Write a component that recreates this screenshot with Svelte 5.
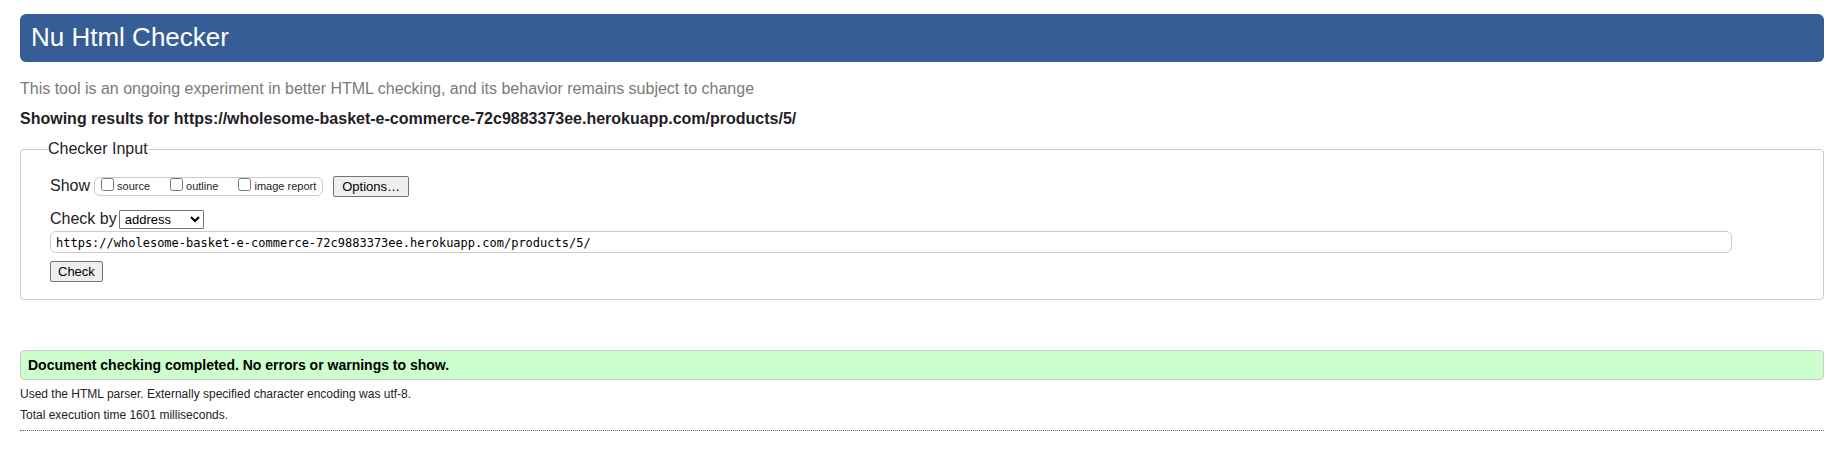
<script>
  let shown = $state({ source: false, outline: false, image: false });
  let method = $state('address');
  let address = $state('https://wholesome-basket-e-commerce-72c9883373ee.herokuapp.com/products/5/');
  const checked = 'https://wholesome-basket-e-commerce-72c9883373ee.herokuapp.com/products/5/';
</script>

<div class="page">
  <header class="banner">
    <h1>Nu Html Checker</h1>
  </header>

  <p class="note">This tool is an ongoing experiment in better HTML checking, and its behavior remains subject to change</p>
  <h2>Showing results for {checked}</h2>

  <form onsubmit={(e) => e.preventDefault()}>
    <fieldset>
      <legend>Checker Input</legend>
      <div class="row show-row">
        <span class="lead">Show</span>
        <div class="checks">
          <label><input type="checkbox" bind:checked={shown.source} />source</label>
          <label><input type="checkbox" bind:checked={shown.outline} />outline</label>
          <label><input type="checkbox" bind:checked={shown.image} />image report</label>
        </div>
        <button type="button">Options…</button>
      </div>
      <div class="row by-row">
        <label class="lead" for="method">Check by</label>
        <select id="method" bind:value={method}>
          <option value="address">address</option>
          <option value="file">file upload</option>
          <option value="text">text input</option>
        </select>
      </div>
      <input class="address" type="text" aria-label="Address" spellcheck="false" bind:value={address} />
      <button class="submit" type="submit">Check</button>
    </fieldset>
  </form>

  <p class="success">Document checking completed. No errors or warnings to show.</p>
  <p class="detail">Used the HTML parser. Externally specified character encoding was utf-8.</p>
  <p class="detail">Total execution time 1601 milliseconds.</p>
  <hr />
</div>

<style>
  :global(body) {
    margin: 0;
    background: #fff;
  }
  .page {
    padding: 14px 9px 14px 20px;
    font-family: Arial, "Liberation Sans", sans-serif;
    font-size: 16px;
    line-height: 20px;
    color: #1f2126;
  }
  .banner {
    padding: 8px 11px 10px;
    border-radius: 6px;
    background: #365d95;
  }
  h1 {
    margin: 0;
    font-size: 26px;
    line-height: 30px;
    font-weight: 400;
    color: #fff;
  }
  h2 {
    margin: 10px 0;
    font-size: 16px;
    font-weight: 700;
  }
  .note {
    margin: 17px 0 0;
    color: #7a7a7a;
  }
  fieldset {
    margin: 0;
    min-width: 0;
    padding: 16px 91px 17px 29px;
    border: 1px solid #ccc;
    border-radius: 4px;
  }
  legend {
    margin-left: -2px;
    padding: 0;
  }
  .row {
    display: flex;
    align-items: center;
  }
  .show-row {
    height: 22px;
    margin-bottom: 12px;
  }
  .by-row {
    height: 20px;
    margin-bottom: 2px;
    gap: 2px;
  }
  .checks {
    display: flex;
    align-items: center;
    box-sizing: border-box;
    height: 19px;
    margin: 0 10px 0 4px;
    padding: 0 6px;
    gap: 20px;
    border: 1px solid #ccc;
    border-radius: 6px;
  }
  .checks label {
    display: flex;
    align-items: center;
    gap: 3px;
    font-size: 11px;
    line-height: 17px;
  }
  .checks input {
    width: 13px;
    height: 13px;
    margin: 0 0 3px;
  }
  button {
    display: block;
    box-sizing: border-box;
    height: 21px;
    padding: 0 8px;
    border: 1px solid #767676;
    border-radius: 2px;
    background: #efefef;
    font: 13px/19px Arial, "Liberation Sans", sans-serif;
    color: #000;
  }
  .submit {
    padding: 0 7px;
  }
  select {
    box-sizing: border-box;
    width: 85px;
    height: 19px;
    padding: 0 1px;
    border: 1px solid #767676;
    border-radius: 1px;
    background-color: #fff;
    font: 13px/17px Arial, "Liberation Sans", sans-serif;
    color: #000;
  }
  .address {
    display: block;
    box-sizing: border-box;
    width: 100%;
    height: 22px;
    margin: 0 0 8px;
    padding: 3px 5px 1px;
    border: 1px solid #ccc;
    border-radius: 6px;
    background: #fff;
    font: 12px/16px "DejaVu Sans Mono", monospace;
    color: #000;
  }
  .success {
    margin: 50px 0 4px;
    padding: 4px 7px;
    border: 1px solid #ccc;
    border-radius: 4px;
    background: #cfc;
    font-size: 14px;
    font-weight: 700;
    color: #000;
  }
  .detail {
    margin: 0 0 1px;
    font-size: 12px;
  }
  hr {
    margin: 5px 0 0;
    border: 0;
    border-top: 1px dotted #666;
  }
</style>
